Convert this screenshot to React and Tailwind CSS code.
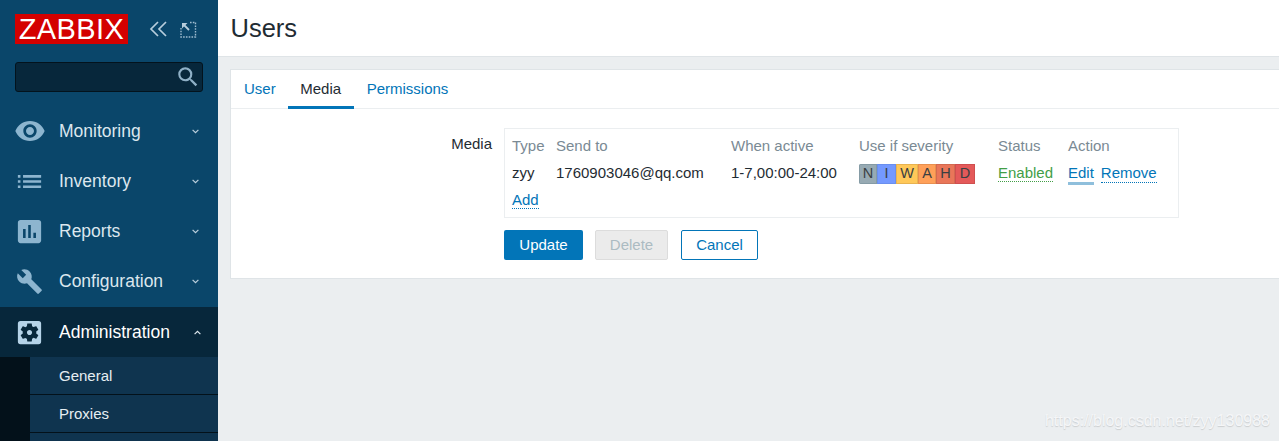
import {
    MdRemoveRedEye,
    MdList,
    MdAssessment,
    MdBuild,
    MdSettingsApplications,
    MdSearch,
} from "react-icons/md";

const navItems = [
    { label: "Monitoring", icon: MdRemoveRedEye, size: 32 },
    { label: "Inventory", icon: MdList, size: 31 },
    { label: "Reports", icon: MdAssessment, size: 31 },
    { label: "Configuration", icon: MdBuild, size: 27 },
];

const severities = [
    { label: "N", className: "w-[18px] bg-[#97aab3] border-[#859ba5]" },
    { label: "I", className: "w-[19px] bg-[#7499ff] border-[#6a8fee]" },
    { label: "W", className: "w-[22px] bg-[#ffc859] border-[#e8b350]" },
    { label: "A", className: "w-[18px] bg-[#ffa059] border-[#e8904f]" },
    { label: "H", className: "w-[19px] bg-[#e97659] border-[#d36a50]" },
    { label: "D", className: "w-[20px] bg-[#e45959] border-[#cf4f4f]" },
];

function Chevron({ up }) {
    return (
        <svg width="7" height="5" viewBox="0 0 7 5" fill="none" stroke="currentColor" strokeWidth="1.2">
            <path d={up ? "M.6 4.2 3.5 1.3 6.4 4.2" : "M.6 .8 3.5 3.7 6.4 .8"} />
        </svg>
    );
}

function Sidebar() {
    return (
        <aside className="w-[218px] shrink-0 bg-[#0a466a] flex flex-col">
            <div className="flex items-start pl-[15px] pt-[14px] h-[62px] shrink-0">
                <div className="w-[113px] h-[30px] bg-[#d40000] text-white text-[29px] leading-[30px] text-center tracking-[0.4px]">
                    ZABBIX
                </div>
                <svg className="ml-[21px] mt-[7px]" width="19" height="16" viewBox="0 0 19 16" fill="none" stroke="#b7cddc" strokeWidth="1.7">
                    <path d="M9 1 2 8l7 7M17 1l-7 7 7 7" />
                </svg>
                <svg className="ml-[12px] mt-[7px]" width="17" height="17" viewBox="0 0 17 17" fill="none" stroke="#9fbccf">
                    <path d="M10 1.5h5.5V16H1V7" strokeDasharray="1.6 1.2" strokeWidth="1.4" />
                    <path d="M2 2h5.5L2 7.5z" fill="#b7cddc" stroke="none" />
                    <path d="M4 4l5 5" strokeWidth="1.8" stroke="#b7cddc" />
                </svg>
            </div>
            <div className="mx-[15px] h-[30px] shrink-0 rounded-[3px] bg-[#07273b] border border-[#03131d] flex items-center justify-end pr-[1px]">
                <MdSearch size={26} color="#8fb0c6" />
            </div>
            <nav className="mt-[14px] flex-1 min-h-0 flex flex-col">
                {navItems.map((item) => (
                    <div key={item.label} className="h-[50px] shrink-0 flex items-center text-[#dce7ee]">
                        <span className="w-[59px] flex justify-center text-[#8db5cf]">
                            <item.icon size={item.size} />
                        </span>
                        <span className="flex-1 text-[17.5px] pt-[1px]">{item.label}</span>
                        <span className="pr-[19px] text-[#bcd0dd] flex">
                            <Chevron />
                        </span>
                    </div>
                ))}
                <div className="h-[50px] shrink-0 mt-px flex items-center bg-[#07273b] text-white">
                    <span className="w-[59px] flex justify-center text-[#b5d3e8]">
                        <MdSettingsApplications size={31} />
                    </span>
                    <span className="flex-1 text-[17.5px]">Administration</span>
                    <span className="pr-[17px] text-[#dce7ee] flex">
                        <Chevron up />
                    </span>
                </div>
                <div className="bg-[#03111a] pl-[30px] flex flex-col flex-1 min-h-0">
                    <div className="h-[38px] shrink-0 bg-[#0f344f] border-b border-[#03111a] pl-[29px] pt-[1px] flex items-center text-[15px] text-[#e6eef3]">General</div>
                    <div className="h-[38px] shrink-0 bg-[#0f344f] border-b border-[#03111a] pl-[29px] pt-[1px] flex items-center text-[15px] text-[#e6eef3]">Proxies</div>
                    <div className="flex-1 bg-[#0f344f]"></div>
                </div>
            </nav>
        </aside>
    );
}

function MediaTable() {
    const head = "text-[#7a8a94]";
    const link = "text-[#0275b8] border-b border-dotted border-[#0275b8] leading-[17px]";
    return (
        <div className="w-[675px] h-[90px] border border-[#ebeef0] pl-[7px] pt-[4px] grid grid-cols-[44px_175px_128px_139px_70px_1fr] auto-rows-[27px] items-center text-[15px] text-[#1f2c33]">
            <div className={head}>Type</div>
            <div className={head}>Send to</div>
            <div className={head}>When active</div>
            <div className={head}>Use if severity</div>
            <div className={head}>Status</div>
            <div className={head}>Action</div>
            <div>zyy</div>
            <div>1760903046@qq.com</div>
            <div>1-7,00:00-24:00</div>
            <div className="flex h-[20px] rounded-[2px] overflow-hidden">
                {severities.map((s) => (
                    <span key={s.label} className={`${s.className} border flex items-center justify-center text-[14.5px] leading-none text-[#3a3f42]`}>
                        {s.label}
                    </span>
                ))}
            </div>
            <div>
                <span className="text-[#429e47] border-b border-dotted border-[#429e47] leading-[17px] inline-block">Enabled</span>
            </div>
            <div className="flex gap-[7px]">
                <span className="text-[#0275b8] border-b-[3px] border-[#8fbfdc] leading-[17px] h-[21px] mt-[1px]">Edit</span>
                <span className={`${link} h-[19px] mt-[1px]`}>Remove</span>
            </div>
            <div>
                <span className={`${link} inline-block`}>Add</span>
            </div>
        </div>
    );
}

export default function App() {
    return (
        <div className="relative w-[1279px] h-[441px] overflow-hidden flex bg-[#ebeef0] font-['Liberation_Sans',Arial,sans-serif]">
            <Sidebar />
            <main className="flex-1 min-w-0 flex flex-col">
                <header className="h-[57px] shrink-0 bg-white border-b border-[#dfe4e7] pl-[12.5px] flex items-center">
                    <h1 className="text-[25.5px] text-[#1f2c33]">Users</h1>
                </header>
                <section className="ml-[12px] mt-[12px] h-[210px] shrink-0 bg-white border border-[#dfe4e7] border-r-0">
                    <div className="h-[39px] border-b border-[#ebeef0] flex pl-[1px] text-[15px] text-[#0275b8]">
                        <div className="px-[12px] pt-[8px]">User</div>
                        <div className="w-[66px] text-center pt-[8px] text-[#1f2c33] border-b-[3px] border-[#0275b8] h-[39px]">Media</div>
                        <div className="pl-[13px] pt-[8px]">Permissions</div>
                    </div>
                    <div className="pt-[19px] flex">
                        <div className="w-[261px] pt-[5px] text-right text-[15px] text-[#1f2c33]">Media</div>
                        <div className="ml-[12px]">
                            <MediaTable />
                            <div className="mt-[12px] flex text-[15px]">
                                <button className="w-[79px] h-[30px] rounded-[2px] bg-[#0275b8] text-white">Update</button>
                                <button className="ml-[12px] w-[73px] h-[30px] rounded-[2px] bg-[#ebebeb] border border-[#dcdcdc] text-[#acbbc2]">Delete</button>
                                <button className="ml-[13px] w-[77px] h-[30px] rounded-[2px] bg-white border border-[#0275b8] text-[#0275b8]">Cancel</button>
                            </div>
                        </div>
                    </div>
                </section>
            </main>
            <div className="absolute right-[9px] bottom-[10px] text-[16px] leading-[20px] text-[#f5f6f8] [text-shadow:0_1px_1px_rgba(0,0,0,0.14)]">
                https://blog.csdn.net/zyy130988
            </div>
        </div>
    );
}
